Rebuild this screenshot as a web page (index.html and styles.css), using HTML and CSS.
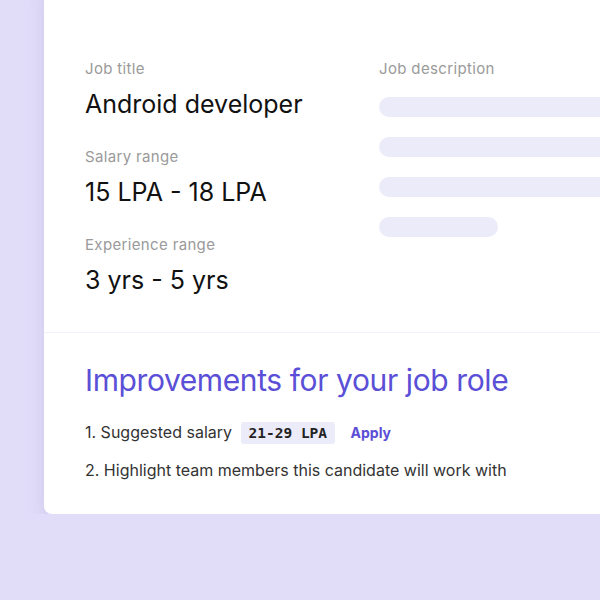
FILE: index.html
```html
<!DOCTYPE html>
<html lang="en">
<head>
  <meta charset="UTF-8" />
  <title>Job details</title>
  <link rel="stylesheet" href="styles.css">
</head>
<body>
  <div class="card">
    <div class="details">
      <div class="col">
        <div class="label">Job title</div>
        <div class="value">Android developer</div>
        <div class="label">Salary range</div>
        <div class="value">15 LPA - 18 LPA</div>
        <div class="label">Experience range</div>
        <div class="value">3 yrs - 5 yrs</div>
      </div>
      <div class="col desc">
        <div class="label">Job description</div>
        <div class="bars">
          <div class="bar"></div>
          <div class="bar"></div>
          <div class="bar"></div>
          <div class="bar short"></div>
        </div>
      </div>
    </div>

    <div class="improve">
      <h2>Improvements for your job role</h2>
      <ol>
        <li>1. Suggested salary <span class="badge">21-29 LPA</span> <a class="apply">Apply</a></li>
        <li>2. Highlight team members this candidate will work with</li>
      </ol>
    </div>
  </div>
</body>
</html>
```

FILE: styles.css
```css
body {
  margin: 0;
  background: #e1ddf9;
  font-family: Inter, "Noto Sans", sans-serif;
  overflow: hidden;
}
.card {
  margin: -20px 0 0 44px;
  width: 700px;
  background: #fff;
  border-radius: 8px;
  box-shadow: 0 8px 20px rgba(120, 110, 180, 0.18);
}
.details {
  display: flex;
  padding: 79px 41px 36px;
  border-bottom: 1px solid #f2f1fb;
}
.col {
  width: 294px;
}
.desc {
  flex: 1;
}
.label {
  font-size: 15px;
  line-height: 20px;
  letter-spacing: 0.35px;
  color: #9a9a9a;
}
.value {
  font-size: 25px;
  line-height: 32px;
  color: #111;
  margin: 9px 0 27px;
}
.col .value:last-child {
  margin-bottom: 0;
}
.bars {
  margin-top: 18px;
  display: flex;
  flex-direction: column;
  gap: 20px;
}
.bar {
  height: 20px;
  border-radius: 10px;
  background: #ecebf9;
}
.bar.short {
  width: 119px;
}
.improve {
  padding: 27px 41px 33px;
}
h2 {
  margin: 0;
  font-weight: 400;
  font-size: 30px;
  line-height: 40px;
  letter-spacing: -0.4px;
  color: #5a4fd6;
}
ol {
  list-style: none;
  margin: 21px 0 0;
  padding: 0;
}
li {
  font-size: 16px;
  line-height: 22px;
  color: #333;
  margin-bottom: 15px;
}
li:last-child {
  margin-bottom: 0;
}
.badge {
  display: inline-block;
  margin-left: 4px;
  padding: 0 8px;
  line-height: 22px;
  border-radius: 3px;
  background: #ecebf9;
  font-family: "DejaVu Sans Mono", monospace;
  font-weight: bold;
  font-size: 14.5px;
  color: #222;
}
.apply {
  margin-left: 11px;
  font-weight: bold;
  font-size: 14px;
  color: #5a4fd6;
}
```
